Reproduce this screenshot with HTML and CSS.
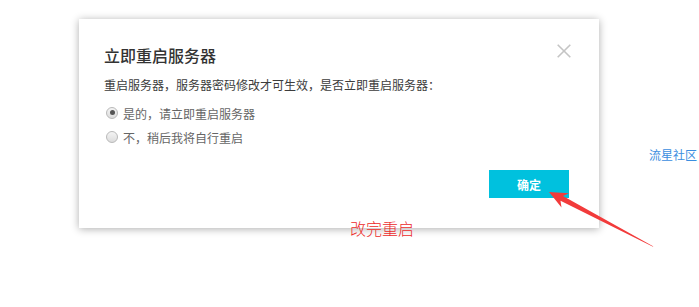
FILE: index.html
```html
<!DOCTYPE html>
<html lang="zh-CN">
<head>
<meta charset="utf-8">
<title>立即重启服务器</title>
<link rel="stylesheet" href="styles.css">
</head>
<body>
<div class="page">
  <a class="community-link" href="#">流星社区</a>
</div>

<div class="dialog">
  <div class="dialog-header">
    <h2 class="dialog-title">立即重启服务器</h2>
    <svg class="close-icon" width="14" height="14" viewBox="0 0 14 14">
      <path d="M0.7 0.7 L13.3 13.3 M13.3 0.7 L0.7 13.3" stroke="#c4c4c4" stroke-width="1.6" fill="none"/>
    </svg>
  </div>
  <p class="dialog-desc">重启服务器，服务器密码修改才可生效，是否立即重启服务器：</p>
  <div class="options">
    <label class="option"><span class="radio checked"></span>是的，请立即重启服务器</label>
    <label class="option"><span class="radio"></span>不，稍后我将自行重启</label>
  </div>
  <div class="dialog-footer">
    <button class="btn-primary">确定</button>
  </div>
</div>

<span class="annotation-text">改完重启</span>
<svg class="annotation-arrow" width="699" height="307" viewBox="0 0 699 307">
  <polygon points="549,192 569,193.3 563,196 653.5,246.5 652.5,246.5 560.5,200.8 561.5,207.5" fill="#f23b3b"/>
</svg>
</body>
</html>
```

FILE: styles.css
```css
* { box-sizing: border-box; }

html, body {
  margin: 0;
  padding: 0;
  background: #ffffff;
  width: 699px;
  height: 307px;
  overflow: hidden;
  font-family: "Noto Sans CJK SC", "Liberation Sans", sans-serif;
}

.page {
  padding: 141px 0 0 649px;
  white-space: nowrap;
}

.community-link {
  font-size: 12px;
  line-height: 18px;
  color: #3b8ee0;
  text-decoration: none;
}

.dialog {
  position: absolute;
  left: 79px;
  top: 19px;
  width: 520px;
  background: #ffffff;
  box-shadow: 0 1px 8px rgba(0, 0, 0, 0.32);
  padding: 24px 28px 30px 25px;
}

.dialog-header {
  display: flex;
  justify-content: space-between;
  align-items: flex-start;
}

.dialog-title {
  margin: 0;
  font-size: 16px;
  line-height: 24px;
  font-weight: 500;
  color: #333333;
}

.close-icon {
  margin-top: 1px;
  display: block;
}

.dialog-desc {
  margin: 9px 0 0;
  font-size: 12px;
  line-height: 18px;
  color: #3c3c3c;
}

.options {
  margin-top: 10px;
  display: flex;
  flex-direction: column;
  gap: 4px;
}

.option {
  display: flex;
  align-items: center;
  font-size: 12px;
  line-height: 20px;
  color: #666666;
  padding-left: 2px;
}

.radio {
  width: 12px;
  height: 12px;
  border-radius: 50%;
  border: 1px solid #b9b9b9;
  background: linear-gradient(#f4f4f4, #dcdcdc);
  margin-right: 5px;
  margin-top: -3px;
  display: flex;
  align-items: center;
  justify-content: center;
}

.radio.checked::after {
  content: "";
  width: 5px;
  height: 5px;
  border-radius: 50%;
  background: #555555;
}

.dialog-footer {
  margin-top: 22px;
  display: flex;
  justify-content: flex-end;
  padding-right: 2px;
}

.btn-primary {
  width: 80px;
  height: 28px;
  border: 0;
  background: #00c1de;
  color: #ffffff;
  font-family: inherit;
  font-size: 12px;
  font-weight: 700;
  padding: 0;
}

.annotation-text {
  position: absolute;
  left: 350px;
  top: 219px;
  font-size: 16px;
  line-height: 18px;
  color: #ec2a2a;
  font-weight: 300;
}

.annotation-arrow {
  position: absolute;
  left: 0;
  top: 0;
  pointer-events: none;
}
```
